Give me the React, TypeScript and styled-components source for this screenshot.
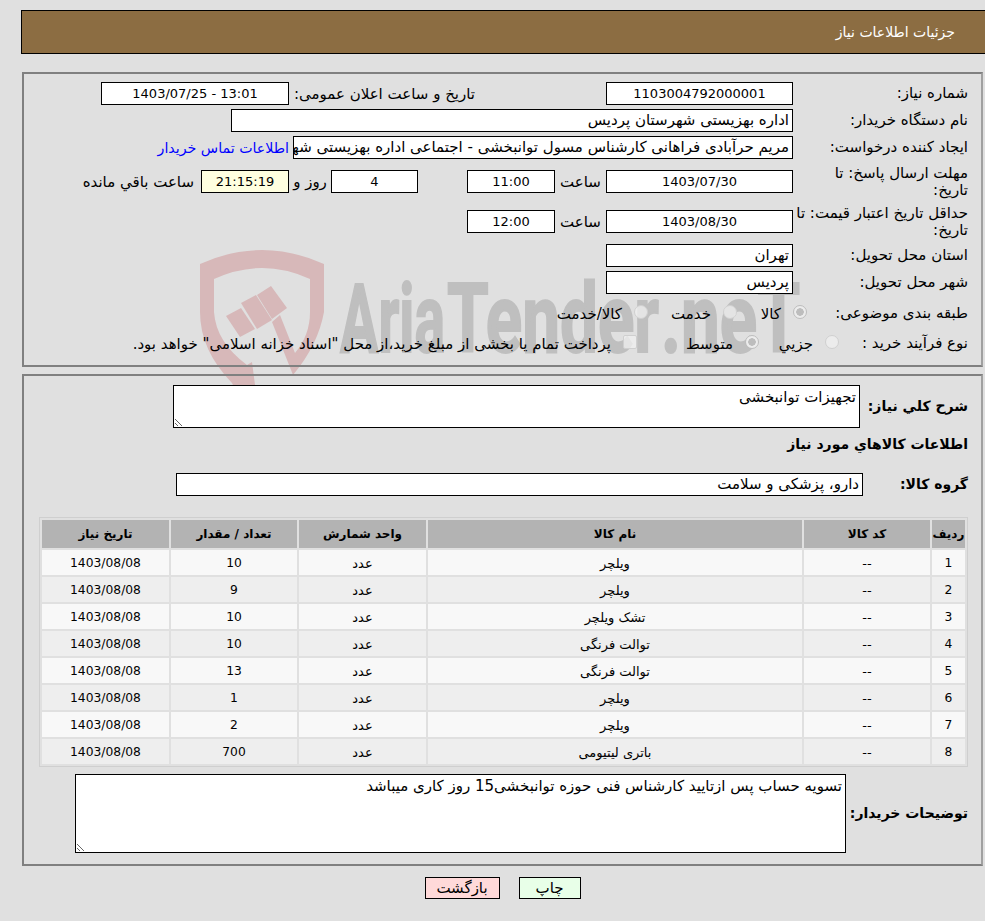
import React from 'react'
import styled, { createGlobalStyle } from 'styled-components'

const GlobalStyle = createGlobalStyle`
  html, body {
    margin: 0;
    padding: 0;
    background: #e0e0e0;
  }
  body {
    font-family: "DejaVu Sans", sans-serif;
    font-size: 15px;
    color: #000;
  }
`

const Page = styled.div`
  position: relative;
  width: 985px;
  height: 921px;
  overflow: hidden;
  padding-top: 10px;
  box-sizing: border-box;
`

const Watermark = styled.svg`
  position: absolute;
  left: 0;
  top: 0;
  z-index: 0;
`

const LogoText = styled.text`
  direction: ltr;
  fill: #bfbfbf;
  stroke: #bfbfbf;
  stroke-width: 2px;
  font-family: Roboto, sans-serif;
  font-size: 96px;
  font-weight: 700;
`

const Header = styled.div`
  display: flex;
  align-items: center;
  height: 44px;
  margin-left: 21px;
  padding-right: 30px;
  box-sizing: border-box;
  background: #8c6d42;
  border: 1px solid #000;
  border-right: 0;
  color: #fff;
  font-size: 14px;
`

const Panel = styled.div<{ $top: number; $pt: number; $pb: number }>`
  position: relative;
  z-index: 1;
  width: 961px;
  margin-top: ${p => p.$top}px;
  margin-right: 2px;
  padding: ${p => p.$pt}px 13px ${p => p.$pb}px 0;
  box-sizing: border-box;
  border: 2px solid #808080;
  border-right-color: #a0a0a0;
`

const Row = styled.div<{ $gap?: number; $h?: number }>`
  display: flex;
  align-items: center;
  height: ${p => p.$h ?? 23}px;
  margin-bottom: ${p => p.$gap ?? 4}px;
`

const Label = styled.div<{ $w?: number; $bold?: boolean }>`
  flex: none;
  width: ${p => p.$w ?? 175}px;
  line-height: 17px;
  font-weight: ${p => (p.$bold ? 700 : 400)};
  font-size: ${p => (p.$bold ? 14 : 15)}px;
`

const Field = styled.div<{ $w: number; $num?: boolean; $bg?: string }>`
  flex: none;
  width: ${p => p.$w}px;
  height: 23px;
  line-height: 21px;
  padding: 0 3px;
  box-sizing: border-box;
  border: 1px solid #000;
  background: ${p => p.$bg ?? '#fff'};
  font-size: ${p => (p.$num ? 13 : 15)}px;
  text-align: ${p => (p.$num ? 'center' : 'right')};
  white-space: nowrap;
  overflow: hidden;
`

const Caption = styled.div<{ $w?: number; $pad?: number; $center?: boolean }>`
  flex: none;
  width: ${p => (p.$w ? `${p.$w}px` : 'auto')};
  padding-right: ${p => p.$pad ?? 0}px;
  box-sizing: border-box;
  text-align: ${p => (p.$center ? 'center' : 'right')};
  white-space: nowrap;
`

const ContactLink = styled.a`
  flex: none;
  margin-right: 4px;
  color: #0000ff;
  font-size: 14.2px;
  text-decoration: none;
  white-space: nowrap;
`

const Option = styled.label<{ $w?: number }>`
  display: flex;
  flex: none;
  align-items: center;
  gap: 12px;
  width: ${p => (p.$w ? `${p.$w}px` : 'auto')};
  padding-top: 2px;
  white-space: nowrap;
`

const Radio = styled.input.attrs({ type: 'radio', disabled: true })`
  appearance: none;
  flex: none;
  width: 14px;
  height: 14px;
  margin: 0 0 4px;
  border: 1px solid #d0d0d0;
  border-radius: 50%;
  background: rgba(240, 240, 240, 0.75);

  &:checked {
    background: radial-gradient(circle, #bdbdbd 0 3.5px, #ececec 4px);
    border-color: #bdbdbd;
  }
`

const Check = styled.input.attrs({ type: 'checkbox', disabled: true })`
  appearance: none;
  flex: none;
  width: 14px;
  height: 14px;
  margin: 0 0 4px;
  border: 1px solid #cfcfcf;
  border-radius: 2px;
  background: rgba(240, 240, 240, 0.75);
`

const Note = styled.textarea<{ $w: number; $h: number }>`
  display: block;
  flex: none;
  width: ${p => p.$w}px;
  height: ${p => p.$h}px;
  margin: 0;
  padding: 3px;
  box-sizing: border-box;
  border: 1px solid #000;
  border-radius: 0;
  outline: none;
  background: #fff;
  color: #000;
  font: 15px/17px "DejaVu Sans", sans-serif;
`

const Heading = styled.div`
  height: 20px;
  margin: 6px 0 19px;
  line-height: 20px;
  font-size: 14px;
  font-weight: 700;
`

const Table = styled.table`
  width: 929px;
  margin: 21px 0 7px;
  table-layout: fixed;
  border: 1px solid #cfcfcf;
  border-spacing: 2px;
  font-size: 13px;
`

const HeadCell = styled.th<{ $w: number }>`
  width: ${p => p.$w}px;
  height: 28px;
  padding: 0;
  background: #b3b3b3;
  font-size: 12px;
  font-weight: 700;
  text-align: center;
`

const BodyRow = styled.tr<{ $odd: boolean }>`
  background: ${p => (p.$odd ? '#f8f8f8' : '#eeeeee')};
`

const Cell = styled.td<{ $num?: boolean }>`
  height: 25px;
  padding: 1px 0 0;
  box-sizing: border-box;
  font-size: ${p => (p.$num ? 12.3 : 13)}px;
  text-align: center;
`

const Actions = styled.div`
  display: flex;
  justify-content: center;
  gap: 19px;
  width: 961px;
  margin: 11px 2px 0 0;
`

const ActionButton = styled.button<{ $bg: string; $w: number }>`
  width: ${p => p.$w}px;
  height: 22px;
  padding: 0;
  border: 1px solid #000;
  background: ${p => p.$bg};
  color: #000;
  font: 15px "DejaVu Sans", sans-serif;
`

const columns = [
  { title: 'ردیف', width: 33 },
  { title: 'کد کالا', width: 126 },
  { title: 'نام کالا', width: 374 },
  { title: 'واحد شمارش', width: 127 },
  { title: 'تعداد / مقدار', width: 126 },
  { title: 'تاریخ نیاز', width: 127 },
]

const items = [
  { name: 'ویلچر', qty: 10 },
  { name: 'ویلچر', qty: 9 },
  { name: 'تشک ویلچر', qty: 10 },
  { name: 'توالت فرنگی', qty: 10 },
  { name: 'توالت فرنگی', qty: 13 },
  { name: 'ویلچر', qty: 1 },
  { name: 'ویلچر', qty: 2 },
  { name: 'باتری لیتیومی', qty: 700 },
]

const App = () => (
  <>
    <GlobalStyle />
    <Page dir="rtl">
      <Watermark width="985" height="400" viewBox="0 0 985 400" aria-hidden="true">
        <g fill="#d7b8b9">
          <path d="M200 264 Q262 236 324 264 L324 312 Q318 345 293 375 L272 322 L280 315 L295 353 Q310 335 310 312 L310 279 Q262 257 214 279 L214 312 Q216 342 247 365 L252 362 L257 400 L240 400 L232 383 Q200 350 200 312 Z" />
          <path d="M226 316 L241 308 L255 329 L240 337 Z" />
          <path d="M241 303 L256 295 L272 320 L257 329 Z" />
          <path d="M257 295 L271 286 L287 308 L272 319 Z" />
        </g>
        <LogoText x="340" y="352" textLength="105" lengthAdjust="spacingAndGlyphs">Aria</LogoText>
        <LogoText x="447" y="352" textLength="212" lengthAdjust="spacingAndGlyphs">Tender</LogoText>
        <LogoText x="661" y="352" textLength="139" lengthAdjust="spacingAndGlyphs">.neT</LogoText>
      </Watermark>

      <Header>جزئیات اطلاعات نیاز</Header>

      <Panel $top={18} $pt={8} $pb={10}>
        <Row>
          <Label>شماره نیاز:</Label>
          <Field $w={187} $num>1103004792000001</Field>
          <Caption $w={317} $pad={131}>تاریخ و ساعت اعلان عمومی:</Caption>
          <Field $w={188} $num>13:01 - 1403/07/25</Field>
        </Row>
        <Row>
          <Label>نام دستگاه خریدار:</Label>
          <Field $w={562}>اداره بهزیستی شهرستان پردیس</Field>
        </Row>
        <Row $gap={11}>
          <Label>ایجاد کننده درخواست:</Label>
          <Field $w={500}>مریم حرآبادی فراهانی کارشناس مسول توانبخشی - اجتماعی اداره بهزیستی شهرستان پردیس</Field>
          <ContactLink href="#">اطلاعات تماس خریدار</ContactLink>
        </Row>
        <Row $gap={17}>
          <Label>مهلت ارسال پاسخ: تا<br />تاریخ:</Label>
          <Field $w={187} $num>1403/07/30</Field>
          <Caption $w={51} $center>ساعت</Caption>
          <Field $w={88} $num>11:00</Field>
          <Caption $w={49} />
          <Field $w={87} $num>4</Field>
          <Caption $w={42} $center>روز و</Caption>
          <Field $w={88} $num $bg="#ffffe0">21:15:19</Field>
          <Caption $pad={7}>ساعت باقي مانده</Caption>
        </Row>
        <Row $gap={11}>
          <Label>حداقل تاریخ اعتبار قیمت: تا<br />تاریخ:</Label>
          <Field $w={187} $num>1403/08/30</Field>
          <Caption $w={51} $center>ساعت</Caption>
          <Field $w={88} $num>12:00</Field>
        </Row>
        <Row>
          <Label>استان محل تحویل:</Label>
          <Field $w={187}>تهران</Field>
        </Row>
        <Row $gap={7}>
          <Label>شهر محل تحویل:</Label>
          <Field $w={187}>پردیس</Field>
        </Row>
        <Row $h={24} $gap={6}>
          <Label $w={161}>طبقه بندی موضوعی:</Label>
          <Option $w={70}><Radio name="kind" defaultChecked />کالا</Option>
          <Option $w={89}><Radio name="kind" />خدمت</Option>
          <Option><Radio name="kind" />کالا/خدمت</Option>
        </Row>
        <Row $h={24} $gap={0}>
          <Label $w={129}>نوع فرآیند خرید :</Label>
          <Option $w={80}><Radio name="process" />جزيي</Option>
          <Option $w={122}><Radio name="process" defaultChecked />متوسط</Option>
          <Option><Check />پرداخت تمام یا بخشی از مبلغ خرید،از محل "اسناد خزانه اسلامی" خواهد بود.</Option>
        </Row>
      </Panel>

      <Panel $top={7} $pt={9} $pb={11}>
        <Row $h={43} $gap={0}>
          <Label $w={108} $bold>شرح کلي نياز:</Label>
          <Note $w={687} $h={43} readOnly defaultValue="تجهیزات توانبخشی" />
        </Row>
        <Heading>اطلاعات کالاهاي مورد نياز</Heading>
        <Row $gap={0}>
          <Label $w={105} $bold>گروه کالا:</Label>
          <Field $w={687}>دارو، پزشکی و سلامت</Field>
        </Row>
        <Table>
          <thead>
            <tr>
              {columns.map(c => <HeadCell key={c.title} $w={c.width}>{c.title}</HeadCell>)}
            </tr>
          </thead>
          <tbody>
            {items.map((item, i) => (
              <BodyRow key={i} $odd={i % 2 === 0}>
                <Cell $num>{i + 1}</Cell>
                <Cell>--</Cell>
                <Cell>{item.name}</Cell>
                <Cell>عدد</Cell>
                <Cell $num>{item.qty}</Cell>
                <Cell $num>1403/08/08</Cell>
              </BodyRow>
            ))}
          </tbody>
        </Table>
        <Row $h={79} $gap={0}>
          <Label $w={122} $bold>توضیحات خریدار:</Label>
          <Note $w={771} $h={79} readOnly defaultValue="تسویه حساب پس ازتایید کارشناس فنی حوزه توانبخشی15 روز کاری میباشد" />
        </Row>
      </Panel>

      <Actions>
        <ActionButton $bg="#e8ffe8" $w={62}>چاپ</ActionButton>
        <ActionButton $bg="#ffd9d9" $w={75}>بازگشت</ActionButton>
      </Actions>
    </Page>
  </>
)

export default App
